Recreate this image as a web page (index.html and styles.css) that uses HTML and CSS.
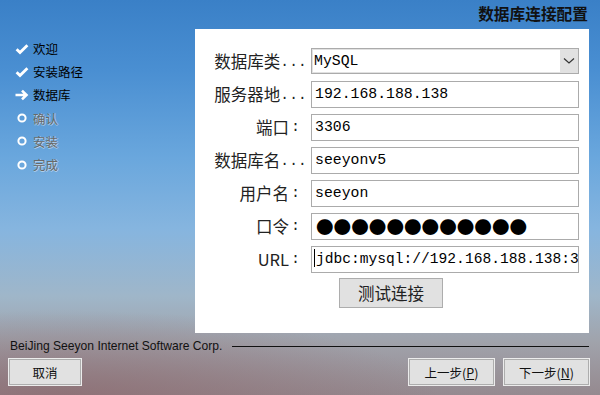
FILE: index.html
```html
<!DOCTYPE html>
<html>
<head>
<meta charset="UTF-8">
<title>数据库连接配置</title>
<link rel="stylesheet" href="styles.css">
</head>
<body>
<div class="window">
	<div class="top">
		<div class="title">数据库连接配置</div>
	</div>
	<div class="middle">
		<ul class="steps">
			<li class="done">
				<svg class="icon" viewBox="0 0 14 12"><path d="M1.6 6.2 L5 9.6 L12.4 2.2" fill="none" stroke="#fff" stroke-width="2.8"/></svg>
				<span>欢迎</span>
			</li>
			<li class="done">
				<svg class="icon" viewBox="0 0 14 12"><path d="M1.6 6.2 L5 9.6 L12.4 2.2" fill="none" stroke="#fff" stroke-width="2.8"/></svg>
				<span>安装路径</span>
			</li>
			<li class="done">
				<svg class="icon" viewBox="0 0 14 12"><path d="M0.5 6 H11.5 M7 1.6 L11.5 6 L7 10.4" fill="none" stroke="#fff" stroke-width="2.6"/></svg>
				<span>数据库</span>
			</li>
			<li class="todo">
				<svg class="icon" viewBox="0 0 14 12"><circle cx="7" cy="6" r="3.6" fill="none" stroke="#fff" stroke-width="2"/></svg>
				<span>确认</span>
			</li>
			<li class="todo">
				<svg class="icon" viewBox="0 0 14 12"><circle cx="7" cy="6" r="3.6" fill="none" stroke="#fff" stroke-width="2"/></svg>
				<span>安装</span>
			</li>
			<li class="todo">
				<svg class="icon" viewBox="0 0 14 12"><circle cx="7" cy="6" r="3.6" fill="none" stroke="#fff" stroke-width="2"/></svg>
				<span>完成</span>
			</li>
		</ul>
		<div class="panel">
			<div class="form">
				<label>数据库类<span class="ell">...</span></label>
				<div class="select">
					<div class="value">MySQL</div>
					<div class="drop">
						<svg viewBox="0 0 12 8" width="12" height="8"><path d="M1 1.5 L6 6 L11 1.5" fill="none" stroke="#333" stroke-width="1.2"/></svg>
					</div>
				</div>
				<label>服务器地<span class="ell">...</span></label>
				<div class="field">192.168.188.138</div>
				<label>端口<span class="colon">:</span></label>
				<div class="field">3306</div>
				<label>数据库名<span class="ell">...</span></label>
				<div class="field">seeyonv5</div>
				<label>用户名<span class="colon">:</span></label>
				<div class="field">seeyon</div>
				<label>口令<span class="colon">:</span></label>
				<div class="field dots">●●●●●●●●●●●●</div>
				<label>URL<span class="colon">:</span></label>
				<div class="field url"><span class="caret"></span>jdbc:mysql://192.168.188.138:3</div>
			</div>
			<div class="test-row">
				<button class="test">测试连接</button>
			</div>
		</div>
	</div>
	<div class="credit">
		<span>BeiJing Seeyon Internet Software Corp.</span>
		<div class="rule"></div>
	</div>
	<div class="buttons">
		<button class="btn">取消</button>
		<div class="nav">
			<button class="btn wide">上一步(<u>P</u>)</button>
			<button class="btn wide">下一步(<u>N</u>)</button>
		</div>
	</div>
</div>
</body>
</html>
```

FILE: styles.css
```css
body
{
	margin: 0;
	width: 600px;
	height: 395px;
	overflow: hidden;
	font-family: "Noto Sans CJK SC", sans-serif;
}

.window
{
	width: 600px;
	height: 395px;
	background:
		radial-gradient(ellipse 380px 90px at 60px 400px, rgba(140, 105, 110, 0.75), rgba(140, 105, 110, 0) 100%),
		linear-gradient(to bottom, #3a80c7 0%, #4a8fd2 18%, #6aa7dd 40%, #86b5df 58%, #9fb6c9 75%, #a0a2aa 87%, #95898f 100%);
	display: flex;
	flex-direction: column;
}

.top
{
	height: 29px;
	display: flex;
	justify-content: flex-end;
}

.title
{
	font-size: 15.7px;
	font-weight: bold;
	color: #111;
	padding-right: 12px;
	line-height: 27px;
}

.middle
{
	display: flex;
	height: 304px;
}

.steps
{
	width: 195px;
	margin: 0;
	padding: 8px 0 0 15px;
	list-style: none;
	box-sizing: border-box;
}

.steps li
{
	display: flex;
	align-items: center;
	height: 23.2px;
	font-size: 12.5px;
}

.icon
{
	width: 14px;
	height: 12px;
	margin-right: 4px;
}

.done span
{
	color: #000;
}

.todo span
{
	color: #686868;
	text-shadow: 1px 0 0 rgba(255, 255, 255, 0.45), 0 1px 0 rgba(255, 255, 255, 0.45);
}

.panel
{
	width: 394px;
	background: #fff;
	padding-top: 19px;
	box-sizing: border-box;
}

.form
{
	display: grid;
	grid-template-columns: 112px 268px;
	grid-auto-rows: 27px;
	column-gap: 4px;
	row-gap: 6px;
}

.form label
{
	display: flex;
	align-items: center;
	justify-content: flex-end;
	height: 27px;
	font-size: 16.5px;
	color: #222;
	line-height: 1;
	white-space: nowrap;
}

.ell
{
	font-family: "Liberation Mono", monospace;
	font-size: 14.5px;
	letter-spacing: 0.2px;
	line-height: 1;
	align-self: flex-end;
	padding-bottom: 6px;
}

.colon
{
	font-family: "Liberation Mono", monospace;
	font-size: 15px;
	line-height: 1;
	padding-left: 2px;
	padding-right: 7px;
}

.field
{
	height: 27px;
	border: 1px solid #ababab;
	box-sizing: border-box;
	font-family: "Liberation Mono", monospace;
	font-size: 14.8px;
	line-height: 25px;
	padding-left: 3px;
	white-space: nowrap;
	overflow: hidden;
	color: #000;
}

.dots
{
	font-family: "Noto Sans CJK SC", sans-serif;
	font-size: 17.6px;
	padding-left: 4px;
}

.url
{
	padding-left: 2px;
	font-size: 14.6px;
}

.caret
{
	display: inline-block;
	width: 1px;
	height: 18px;
	background: #000;
	vertical-align: -4px;
	margin-right: 1px;
}

.select
{
	height: 26px;
	border: 1px solid #ababab;
	box-sizing: border-box;
	background: #e1e1e1;
	padding: 1px;
	display: flex;
}

.select .value
{
	flex: 1;
	background: #fff;
	font-family: "Liberation Mono", monospace;
	font-size: 14.8px;
	line-height: 22px;
	padding-left: 1px;
}

.drop
{
	width: 17px;
	display: flex;
	align-items: center;
	justify-content: center;
}

.test-row
{
	padding-left: 144px;
	padding-top: 5px;
}

.test
{
	width: 104px;
	height: 30px;
	background: #e1e1e1;
	border: 1px solid #adadad;
	font-family: "Noto Sans CJK SC", sans-serif;
	font-size: 16.5px;
	color: #222;
	padding: 0;
}

.credit
{
	display: flex;
	align-items: center;
	height: 18px;
	margin-top: 4px;
	padding-left: 10px;
	padding-right: 11px;
}

.credit span
{
	font-family: "Liberation Sans", Arial, sans-serif;
	font-size: 12.1px;
	color: #111;
}

.rule
{
	flex: 1;
	height: 1px;
	background: #111;
	margin-left: 10px;
}

.buttons
{
	display: flex;
	justify-content: space-between;
	padding: 4px 11px 0 9px;
}

.nav
{
	display: flex;
	gap: 10px;
}

.btn
{
	width: 72px;
	height: 26px;
	background: #e1e1e1;
	border: 1px solid #adadad;
	box-shadow: 0 0 0 1px #ececec;
	font-family: "Noto Sans CJK SC", sans-serif;
	font-size: 12.5px;
	color: #111;
	padding: 0;
}

.btn.wide
{
	width: 85px;
}
```
